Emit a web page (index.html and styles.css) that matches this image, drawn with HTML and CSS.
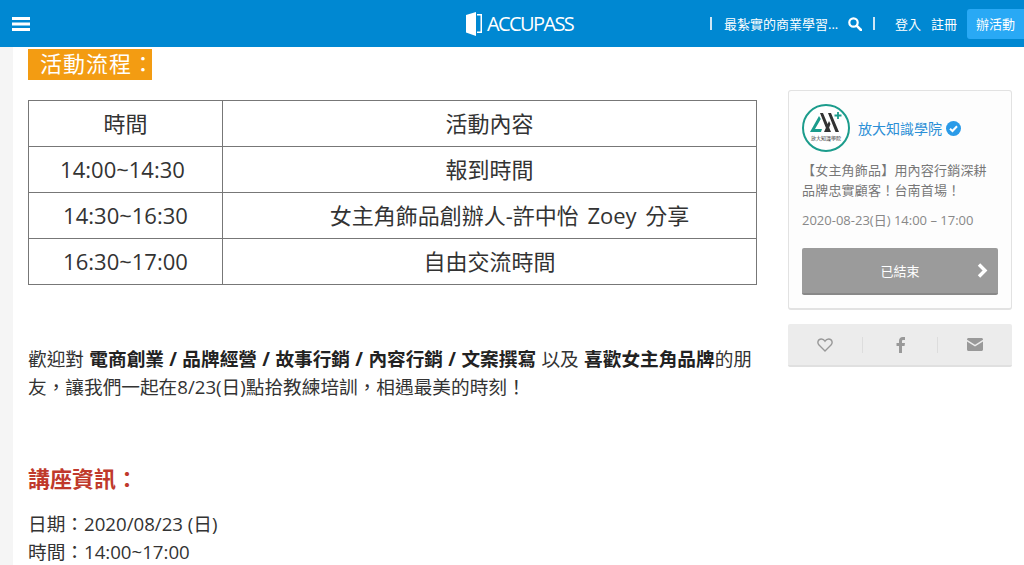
FILE: index.html
```html
<!DOCTYPE html>
<html lang="zh-Hant">

<head>
    <meta charset="UTF-8">
    <meta name="viewport" content="width=device-width, initial-scale=1.0">
    <title>ACCUPASS</title>
    <link rel="stylesheet" href="styles.css">
</head>

<body>

    <header class="topbar">
        <svg class="menu-icon" width="18" height="16" viewBox="0 0 18 16">
            <path d="M0 1h18v3H0zM0 6.500h18v3H0zM0 12h18v3H0z" fill="#fff"/>
        </svg>
        <div class="logo">
            <svg width="16" height="24" viewBox="0 0 16 24">
                <path d="M0 3 10 0v24L0 20.500z" fill="#fff"/>
                <path d="M11 2h5v19h-5v-1.500h3.500v-16H11z" fill="#fff"/>
            </svg>
            <span class="logo-text">ACCUPASS</span>
        </div>
        <div class="top-right">
            <span class="divider"></span>
            <span class="search-text">最紮實的商業學習...</span>
            <svg class="search-icon" width="14" height="14" viewBox="0 0 14 14">
                <circle cx="5.500" cy="5.500" r="4.200" fill="none" stroke="#fff" stroke-width="2.200"/>
                <path d="M8.800 8.800 13 13" stroke="#fff" stroke-width="2.600" stroke-linecap="round"/>
            </svg>
            <span class="divider"></span>
            <a class="top-link login">登入</a>
            <a class="top-link signup">註冊</a>
            <a class="host-btn">辦活動</a>
        </div>
    </header>

    <div class="page">
        <main class="content">
            <h3 class="flow-title">活動流程：</h3>

            <table class="flow-table">
                <tr>
                    <td class="col-time">時間</td>
                    <td>活動內容</td>
                </tr>
                <tr>
                    <td class="col-time clock early">14:00~14:30</td>
                    <td>報到時間</td>
                </tr>
                <tr>
                    <td class="col-time clock">14:30~16:30</td>
                    <td class="speaker">女主角飾品創辦人-許中怡 Zoey 分享</td>
                </tr>
                <tr>
                    <td class="col-time clock">16:30~17:00</td>
                    <td>自由交流時間</td>
                </tr>
            </table>

            <p class="intro">歡迎對 <b>電商創業 / 品牌經營 / 故事行銷 / 內容行銷 / 文案撰寫</b> 以及 <b>喜歡女主角品牌</b>的朋友，讓我們一起在8/23(日)點拾教練培訓，相遇最美的時刻！</p>

            <h4 class="info-title">講座資訊：</h4>
            <p class="info">日期：2020/08/23 (日)<br>時間：14:00~17:00</p>
        </main>

        <aside class="sidebar">
            <div class="card">
                <div class="organizer">
                    <div class="org-logo">
                        <svg width="34" height="22" viewBox="0 0 34 22">
                            <path d="M1 20 10 4l1.800 3L6 17h7l-1 3z" fill="#1c9c8c"/>
                            <path d="M11 1h3l8 19h-3.500zM19 1h3l8 19h-3.500zM15 20l5-11 1.500 3-3 8z" fill="#333"/>
                            <path d="M29 0v7M25.500 3.500h7" stroke="#1c9c8c" stroke-width="1.800"/>
                        </svg>
                        <span class="org-logo-text">放大知識學院</span>
                    </div>
                    <span class="org-name">放大知識學院</span>
                    <svg class="verified" width="15" height="15" viewBox="0 0 15 15">
                        <circle cx="7.500" cy="7.500" r="7.500" fill="#2b9be8"/>
                        <path d="M4 7.700 6.500 10 11 5.200" fill="none" stroke="#fff" stroke-width="2"/>
                    </svg>
                </div>
                <p class="event-name">【女主角飾品】用內容行銷深耕品牌忠實顧客！台南首場！</p>
                <p class="event-date">2020-08-23(日) 14:00 – 17:00</p>
                <div class="ended-btn">
                    <span>已結束</span>
                    <svg class="chevron" width="11" height="15" viewBox="0 0 11 15">
                        <path d="M2 1.500 8 7.500 2 13.500" fill="none" stroke="#fff" stroke-width="3.400"/>
                    </svg>
                </div>
            </div>

            <div class="share-bar">
                <div class="share-item">
                    <svg width="16" height="14" viewBox="0 0 16 14">
                        <path d="M8 13 2 7C0 5 .8 1 4.300 1 6 1 7.300 2 8 3.200 8.700 2 10 1 11.700 1 15.200 1 16 5 14 7z" fill="none" stroke="#999" stroke-width="1.400"/>
                    </svg>
                </div>
                <div class="share-item">
                    <svg width="9" height="16" viewBox="0 0 9 16">
                        <path d="M3 16V9H.5V6H3V4c0-2.500 1.500-4 3.700-4H9v3H7.300C6.400 3 6 3.500 6 4.300V6h3l-.5 3H6v7z" fill="#999"/>
                    </svg>
                </div>
                <div class="share-item">
                    <svg width="16" height="13" viewBox="0 0 16 13">
                        <path d="M0 1.500C0 .7.700 0 1.500 0h13c.8 0 1.500.7 1.500 1.500v.3L8 6.800 0 1.800z" fill="#999"/>
                        <path d="M0 3.500 8 8.500l8-5v8c0 .8-.7 1.500-1.500 1.500h-13C.7 13 0 12.300 0 11.500z" fill="#999"/>
                    </svg>
                </div>
            </div>
        </aside>
    </div>

</body>

</html>
```

FILE: styles.css
```css
* {
    box-sizing: border-box;
}

html,
body {
    height: 565px;
    overflow: hidden;
}

body {
    margin: 0;
    font-family: "Open Sans", "Noto Sans CJK TC", sans-serif;
    color: #222;
    background-color: #f5f5f5;
}

/* top bar */
.topbar {
    position: relative;
    height: 47px;
    background-color: #0088d2;
    color: #fff;
    display: flex;
    align-items: center;
    padding-left: 12px;
}

.logo {
    position: absolute;
    left: 466px;
    top: 12px;
    display: flex;
    align-items: center;
    gap: 5px;
}

.logo-text {
    font-family: "Open Sans", sans-serif;
    font-size: 20px;
    line-height: 24px;
    letter-spacing: -1.6px;
}

.top-right {
    margin-left: auto;
    display: flex;
    align-items: center;
    font-size: 13px;
}

.divider {
    width: 2px;
    height: 13px;
    background-color: #cfe6f5;
}

.search-text {
    margin-left: 12px;
    width: 124px;
    white-space: nowrap;
}

.search-icon + .divider {
    margin-left: 11px;
}

.top-link {
    color: #fff;
}

.login {
    margin-left: 20px;
}

.signup {
    margin-left: 10px;
}

.host-btn {
    margin-left: 10px;
    width: 57px;
    height: 30px;
    line-height: 30px;
    text-align: center;
    background-color: #29a9f5;
    border-radius: 3px 0 0 3px;
}

/* main area */
.page {
    margin-left: 13px;
    height: 518px;
    background-color: #fff;
    display: flex;
    overflow: hidden;
}

.content {
    width: 744px;
    margin-left: 15px;
    flex-shrink: 0;
}

.flow-title {
    display: inline-block;
    margin: 2px 0 0;
    width: 124px;
    height: 31px;
    padding-left: 12px;
    background-color: #f39c12;
    color: #fff;
    font-size: 22px;
    font-weight: 400;
    line-height: 29px;
    letter-spacing: 1px;
    white-space: nowrap;
}

.flow-table {
    display: table;
    margin-top: 20px;
    width: 729px;
    height: 185px;
    border-collapse: collapse;
    table-layout: fixed;
    font-size: 22px;
    color: #333;
}

.flow-table td {
    border: 1px solid #777;
    height: 46px;
    padding: 0 0 4px;
    text-align: center;
}

.flow-table .col-time {
    width: 194px;
}

.flow-table .clock {
    padding-bottom: 2px;
}

.flow-table .early {
    padding-right: 6px;
}

.flow-table .speaker {
    padding-left: 40px;
    word-spacing: 3px;
}

.intro {
    margin: 60px 0 0;
    width: 730px;
    font-size: 18.667px;
    line-height: 28px;
    word-spacing: .5px;
    color: #333;
}

.intro b {
    font-weight: 700;
    color: #222;
}

.info-title {
    margin: 63px 0 0;
    font-size: 22px;
    font-weight: 700;
    line-height: 28px;
    color: #c0392b;
}

.info {
    margin: 18px 0 0;
    font-size: 18.667px;
    line-height: 28px;
    color: #333;
}

/* sidebar */
.sidebar {
    margin-left: 16px;
    padding-top: 43px;
    width: 224px;
    flex-shrink: 0;
}

.card {
    height: 220px;
    padding: 13px 13px 0;
    background-color: #fdfdfd;
    border: 1px solid #e2e2e2;
    border-bottom-width: 2px;
    border-radius: 3px;
}

.organizer {
    display: flex;
    align-items: center;
}

.org-logo {
    width: 48px;
    height: 48px;
    border: 2px solid #1c9c8c;
    border-radius: 50%;
    background-color: #fff;
    display: flex;
    flex-direction: column;
    align-items: center;
    padding-top: 6px;
    overflow: hidden;
}

.org-logo-text {
    font-size: 5px;
    line-height: 8px;
    white-space: nowrap;
    color: #333;
}

.org-name {
    margin-left: 8px;
    font-size: 14px;
    color: #2b8fd6;
}

.verified {
    margin-left: 4px;
}

.event-name {
    margin: 8px 0 0;
    font-size: 13px;
    line-height: 20px;
    color: #777;
    letter-spacing: .2px;
}

.event-date {
    margin: 10px 0 0;
    font-size: 13px;
    line-height: 20px;
    color: #888;
}

.ended-btn {
    position: relative;
    margin-top: 18px;
    height: 47px;
    background-color: #9b9b9b;
    border-bottom: 2px solid #888;
    border-radius: 2px;
    color: #fff;
    font-size: 13px;
    line-height: 46px;
    text-align: center;
}

.chevron {
    position: absolute;
    right: 10px;
    top: 15px;
}

.share-bar {
    margin-top: 14px;
    height: 43px;
    background-color: #ececec;
    border-bottom: 2px solid #e0e0e0;
    border-radius: 2px;
    display: flex;
    align-items: center;
}

.share-item {
    flex: 1;
    height: 16px;
    display: flex;
    align-items: center;
    justify-content: center;
    border-left: 1px solid #ddd;
}

.share-item:first-child {
    border-left: none;
}
```
